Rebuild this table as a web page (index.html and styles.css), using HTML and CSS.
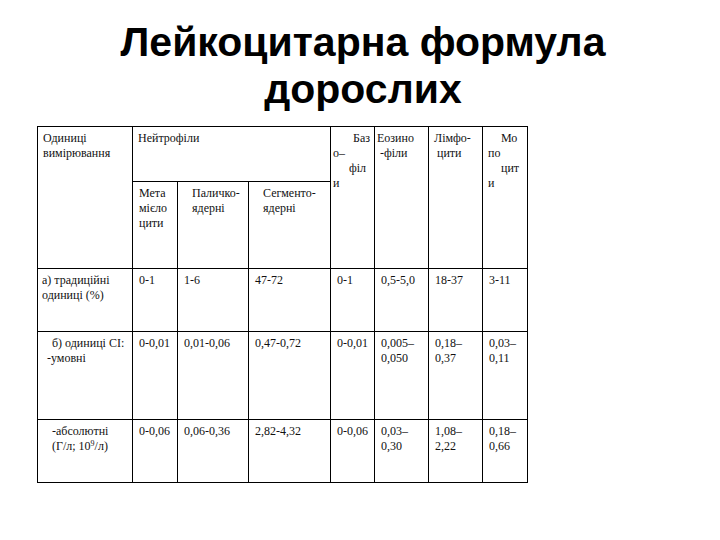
FILE: index.html
```html
<!DOCTYPE html>
<html lang="uk">
<head>
<meta charset="utf-8">
<title>Лейкоцитарна формула дорослих</title>
<link rel="stylesheet" href="styles.css">
</head>
<body>
<h1 class="title">Лейкоцитарна формула<br>дорослих</h1>
<table class="formula">
  <colgroup>
    <col class="c1"><col class="c2"><col class="c3"><col class="c4">
    <col class="c5"><col class="c6"><col class="c7"><col class="c8">
  </colgroup>
  <tr class="h1">
    <td rowspan="2" class="hd">Одиниці<br>вимірювання</td>
    <td colspan="3" class="hd">Нейтрофіли</td>
    <td rowspan="2" class="hd tight"><span class="l in14">Баз</span><span class="l">о–</span><span class="l in12">філ</span><span class="l">и</span></td>
    <td rowspan="2" class="hd tight">Еозино<br><span class="in2">-філи</span></td>
    <td rowspan="2" class="hd">Лімфо-<br><span class="in2">цити</span></td>
    <td rowspan="2" class="hd tight"><span class="l in12">Мо</span><span class="l in2">по</span><span class="l in12">цит</span><span class="l in2">и</span></td>
  </tr>
  <tr class="h2">
    <td class="hd sub">Мета<br>мієло<br>цити</td>
    <td class="hd ind">Паличко-<br>ядерні</td>
    <td class="hd ind">Сегменто-<br>ядерні</td>
  </tr>
  <tr class="r1">
    <td class="first">а) традиційні<br>одиниці (%)</td>
    <td>0-1</td><td>1-6</td><td>47-72</td><td>0-1</td><td>0,5-5,0</td><td>18-37</td><td>3-11</td>
  </tr>
  <tr class="r2">
    <td class="first"><span class="in10">б) одиниці СІ:</span><br><span class="in5">-умовні</span></td>
    <td>0-0,01</td><td>0,01-0,06</td><td>0,47-0,72</td><td>0-0,01</td><td>0,005–<br>0,050</td><td>0,18–<br>0,37</td><td>0,03–<br>0,11</td>
  </tr>
  <tr class="r3">
    <td class="first"><span class="in10">-абсолютні</span><br><span class="in10">(Г/л; 10<sup>9</sup>/л)</span></td>
    <td>0-0,06</td><td>0,06-0,36</td><td>2,82-4,32</td><td>0-0,06</td><td>0,03–<br>0,30</td><td>1,08–<br>2,22</td><td>0,18–<br>0,66</td>
  </tr>
</table>
</body>
</html>
```
FILE: styles.css
```css
html, body {
  margin: 0;
  padding: 0;
  background: #ffffff;
}

.title {
  margin: 19px 0 13px 6px;
  font-family: "Liberation Sans", Arial, sans-serif;
  font-weight: bold;
  font-size: 41px;
  line-height: 47px;
  text-align: center;
  color: #000;
}

.formula {
  margin-left: 37px;
  border-collapse: collapse;
  table-layout: fixed;
  width: 490px;
}

.c1 { width: 95px; }
.c2 { width: 45px; }
.c3 { width: 71px; }
.c4 { width: 82px; }
.c5 { width: 44px; }
.c6 { width: 54px; }
.c7 { width: 54px; }
.c8 { width: 45px; }

.formula td {
  font-family: "Liberation Serif", "DejaVu Serif", "Times New Roman", serif;
  font-size: 12px;
  line-height: 15px;
  color: #111;
  border: 1px solid #000;
  vertical-align: top;
  text-align: left;
  padding: 4px 2px 0 6px;
  white-space: nowrap;
  overflow: hidden;
}

.formula td.hd { padding-left: 5px; }
.formula td.tight { padding-left: 2px; }
.formula td.sub { padding-left: 6px; }
.formula td.ind { padding-left: 14px; }
.formula td.first { padding-left: 4px; }

.h1 { height: 55px; }
.h2 { height: 87px; }
.r1 { height: 63px; }
.r2 { height: 88px; }
.r3 { height: 63px; }

.l { display: block; }
.in14 { padding-left: 20px; }
.in12 { padding-left: 16px; }
.in10 { padding-left: 10px; }
.in5 { padding-left: 5px; }
.in2 { padding-left: 3px; }

sup {
  font-size: 8px;
  line-height: 0;
  vertical-align: 4px;
}
```
